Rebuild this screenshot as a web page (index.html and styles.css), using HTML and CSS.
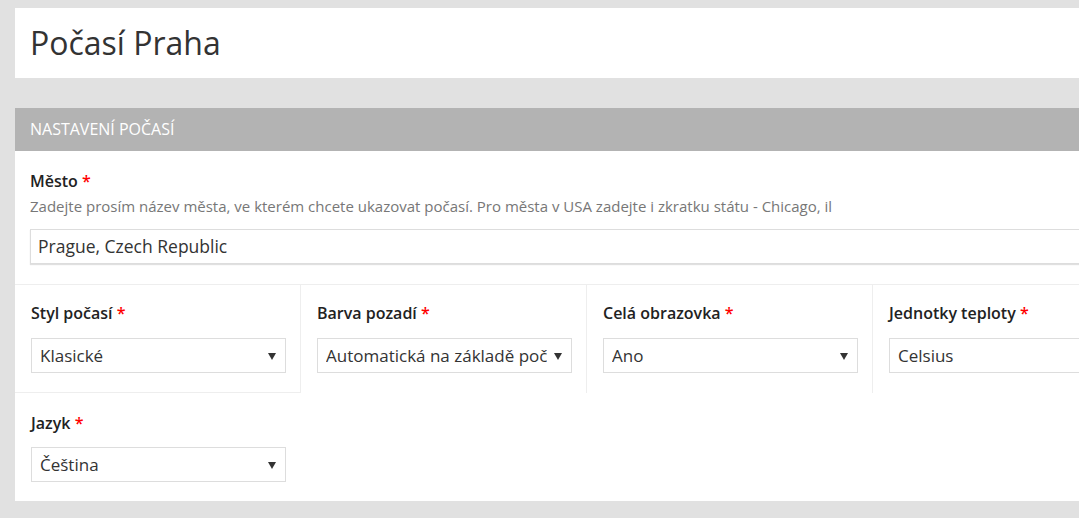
FILE: index.html
```html
<!DOCTYPE html>
<html lang="cs">
<head>
    <meta charset="UTF-8">
    <title>Počasí Praha</title>
    <link rel="stylesheet" href="styles.css">
</head>
<body>
    <div class="page">
        <div class="title-card">
            <h1>Počasí Praha</h1>
        </div>

        <div class="panel">
            <div class="panel-heading">Nastavení počasí</div>
            <div class="panel-body">
                <div class="field field-wide">
                    <label>Město <span class="req">*</span></label>
                    <p class="help">Zadejte prosím název města, ve kterém chcete ukazovat počasí. Pro města v USA zadejte i zkratku státu - Chicago, il</p>
                    <div class="text-input">Prague, Czech Republic</div>
                </div>

                <div class="field-grid">
                    <div class="field cell first">
                        <label>Styl počasí <span class="req">*</span></label>
                        <div class="select"><span>Klasické</span><i class="arrow"></i></div>
                    </div>
                    <div class="field cell">
                        <label>Barva pozadí <span class="req">*</span></label>
                        <div class="select"><span>Automatická na základě počasí</span><i class="arrow"></i></div>
                    </div>
                    <div class="field cell">
                        <label>Celá obrazovka <span class="req">*</span></label>
                        <div class="select"><span>Ano</span><i class="arrow"></i></div>
                    </div>
                    <div class="field cell">
                        <label>Jednotky teploty <span class="req">*</span></label>
                        <div class="select"><span>Celsius</span><i class="arrow"></i></div>
                    </div>
                    <div class="field cell last">
                        <label>Jazyk <span class="req">*</span></label>
                        <div class="select"><span>Čeština</span><i class="arrow"></i></div>
                    </div>
                </div>
            </div>
        </div>
    </div>
</body>
</html>
```

FILE: styles.css
```css
* {
    box-sizing: border-box;
    margin: 0;
    padding: 0;
}

html, body {
    overflow: hidden;
}

body {
    background-color: #e1e1e1;
    color: #333;
    font-family: 'Open Sans', sans-serif;
}

.page {
    width: 1110px;
    padding: 8px 0 0 15px;
}

.title-card {
    background: white;
    height: 70px;
    padding: 14px 15px 0;
}

h1 {
    font-size: 32px;
    font-weight: 400;
    line-height: 42px;
    color: #333;
}

.panel {
    margin-top: 30px;
    background: white;
}

.panel-heading {
    background-color: #b3b3b3;
    color: white;
    height: 43px;
    line-height: 43px;
    padding: 0 15px;
    font-size: 16px;
    text-transform: uppercase;
}

.field label {
    display: block;
    font-size: 16px;
    font-weight: 600;
    line-height: 22px;
    color: #222;
}

.req {
    color: #f00;
}

.field-wide {
    padding: 19px 15px 20px;
    border-bottom: 1px solid #eee;
}

.help {
    font-size: 15px;
    line-height: 20px;
    color: #777;
    margin-top: 4px;
}

.text-input {
    margin-top: 13px;
    height: 35px;
    border: 1px solid #ddd;
    box-shadow: 0 1px 1px rgba(0, 0, 0, 0.12);
    padding: 0 7px;
    font-size: 17.5px;
    line-height: 33px;
}

.field-grid {
    display: grid;
    grid-template-columns: repeat(4, 286px);
}

.cell {
    padding: 17px 15px 19px 16px;
    border-right: 1px solid #eee;
}

.cell.first {
    border-bottom: 1px solid #eee;
}

.cell.last {
    border-right: none;
    padding-top: 19px;
}

.select {
    margin-top: 14px;
    width: 255px;
    height: 35px;
    border: 1px solid #ddd;
    padding: 0 24px 0 8px;
    font-size: 17px;
    line-height: 33px;
    position: relative;
    white-space: nowrap;
    overflow: hidden;
}

.last .select {
    margin-top: 13px;
}

.select span {
    display: block;
    overflow: hidden;
}

.arrow {
    position: absolute;
    right: 9px;
    top: 14px;
    border-left: 4px solid transparent;
    border-right: 4px solid transparent;
    border-top: 7px solid #333;
}
```
